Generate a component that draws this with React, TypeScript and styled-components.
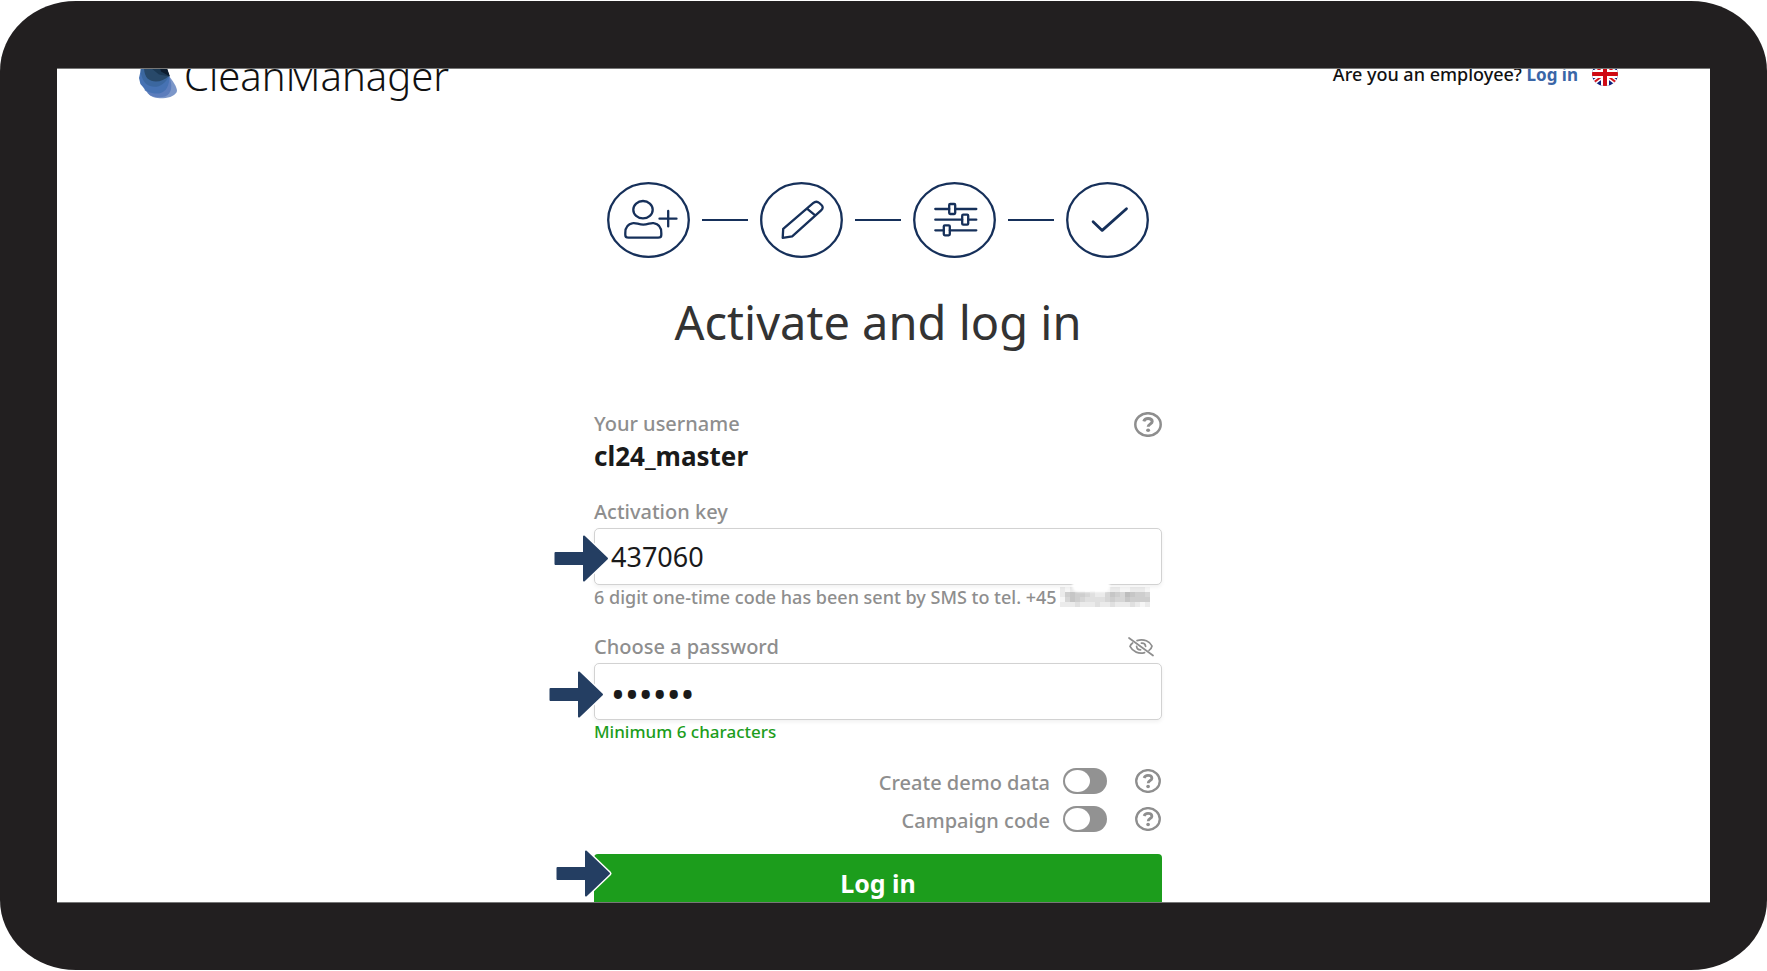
import React from 'react';
import styled, { createGlobalStyle } from 'styled-components';

const navy = '#16305a';
const grey = '#8e8e8e';
const green = '#1c9d1c';

const GlobalStyle = createGlobalStyle`
  *, *::before, *::after { box-sizing: border-box; }
  body {
    margin: 0;
    background: #fff;
    color: #1a1a1a;
    font-family: "Noto Sans", sans-serif;
    font-weight: 500;
  }
`;

const Page = styled.div`
  display: flex;
  height: 100vh;
  padding: 1px 0;
`;

const Device = styled.div`
  display: flex;
  flex: 1;
  min-width: 0;
  padding: 67px 57px;
  background: #221f20;
  border-radius: 76px / 70px;
`;

const Screen = styled.div`
  flex: 1;
  min-width: 0;
  overflow: hidden;
  padding-right: 11px;
  background: #fff;
  border: solid #777;
  border-width: 1px 0;
`;

const Header = styled.header`
  display: flex;
  align-items: center;
  justify-content: space-between;
  height: 56px;
  margin-top: -23px;
  padding: 0 81px 0 82px;
`;

const Brand = styled.a`
  display: flex;
  align-items: center;
  gap: 5px;
  color: #111;
  font-size: 40px;
  font-weight: 300;
  line-height: 56px;
  text-decoration: none;
`;

const BrandName = styled.span`
  padding-top: 4px;
`;

const HeaderTools = styled.div`
  display: flex;
  align-items: center;
  gap: 14px;
`;

const Employee = styled.p`
  margin: 0;
  color: #111;
  font-size: 18px;
  line-height: 24px;
`;

const EmployeeLink = styled.a`
  color: #3a66a7;
  font-size: 17px;
  font-weight: 700;
  text-decoration: none;
`;

const IconButton = styled.button`
  display: flex;
  padding: 0;
  border: 0;
  background: none;
  color: ${grey};
  cursor: pointer;
`;

const Main = styled.main`
  display: flex;
  flex-direction: column;
  align-items: center;
  padding-top: 80px;
`;

const Steps = styled.ol`
  display: flex;
  align-items: center;
  gap: 12px;
  margin: 0;
  padding: 0;
  list-style: none;
`;

const Step = styled.li`
  display: flex;
  align-items: center;
  gap: 12px;

  & + &::before {
    content: "";
    width: 46px;
    height: 2px;
    background: ${navy};
  }
`;

const StepIcon = styled.svg`
  display: block;
  fill: none;
  stroke: ${navy};
  stroke-width: 2.3;
  stroke-linecap: round;
  stroke-linejoin: round;
`;

const Title = styled.h1`
  margin: 36px 0 62px;
  color: #333;
  font-size: 47px;
  font-weight: 400;
  line-height: 56px;
`;

const Form = styled.form`
  width: 568px;
  max-width: 100%;
`;

const Section = styled.div`
  margin-bottom: 28px;
`;

const LabelRow = styled.div`
  display: flex;
  align-items: center;
  justify-content: space-between;
  height: 24px;
  margin-bottom: 4px;
`;

const labelText = `
  color: ${grey};
  font-size: 20px;
  line-height: 24px;
`;

const Label = styled.label`${labelText}`;
const Caption = styled.span`${labelText}`;

const EyeButton = styled(IconButton)`
  margin-right: 8px;
`;

const Username = styled.p`
  margin: 0;
  font-size: 26px;
  font-weight: 700;
  line-height: 32px;
`;

const Target = styled.div`
  position: relative;
`;

const Input = styled.input`
  display: block;
  width: 100%;
  height: 57px;
  padding: ${(p) => (p.type === 'password' ? '4px 16px 0' : '0 16px')};
  border: 1px solid #d2d2d2;
  border-radius: 5px;
  background: #fff;
  box-shadow: 0 2px 4px rgba(0, 0, 0, 0.06);
  color: #1a1a1a;
  font-family: inherit;
  font-size: ${(p) => (p.type === 'password' ? 37 : 27)}px;
  outline: none;
`;

const Hint = styled.p<{ $valid?: boolean }>`
  display: flex;
  gap: 3px;
  margin: 2px 0 0;
  color: ${(p) => (p.$valid ? green : grey)};
  font-size: ${(p) => (p.$valid ? 17 : 18)}px;
  line-height: 20px;
`;

const Arrow = styled.svg<{ $left: number; $top: number }>`
  position: absolute;
  left: ${(p) => p.$left}px;
  top: ${(p) => p.$top}px;
  overflow: visible;
  pointer-events: none;
`;

const Smudge = styled.span`
  position: absolute;
  right: 52px;
  bottom: -7px;
  width: 38px;
  height: 12px;
  border-radius: 10px;
  background: #fff;
  filter: blur(1px);
`;

const Options = styled.div`
  display: grid;
  gap: 12px;
  margin: 26px 0 22px;
`;

const Option = styled.div`
  display: flex;
  align-items: center;
  justify-content: flex-end;
  height: 26px;
  padding-right: 1px;
`;

const OptionLabel = styled(Label)`
  padding-top: 3px;
  margin-right: 13px;
`;

const Toggle = styled.input`
  appearance: none;
  width: 44px;
  height: 26px;
  margin: 0 28px 0 0;
  padding: 2px;
  border-radius: 13px;
  background: #929292;
  cursor: pointer;

  &::before {
    content: "";
    display: block;
    width: 25px;
    height: 22px;
    border-radius: 50%;
    background: #fff;
  }

  &:checked::before {
    margin-left: auto;
  }
`;

const Submit = styled.button`
  display: block;
  width: 100%;
  height: 57px;
  border: 0;
  border-radius: 4px;
  background: ${green};
  color: #fff;
  font-family: inherit;
  font-size: 25px;
  font-weight: 700;
  line-height: 32px;
  cursor: pointer;
`;

const Logo = () => (
  <svg width="40" height="50" viewBox="0 0 40 50" aria-hidden="true">
    <path fill="#7c97c9" d="M10 12 L30 27 C34 32 38 38 38 42 C37 46 31 49 24 49.3 C18 49.5 11 48 10 45 L6 30Z" />
    <path fill="#5c7dbc" d="M6 40 L4 26 L30 27 C34 36 33 45 26 47.6 C20 49.4 10 48 8 43 L5.4 41Z" />
    <path fill="#4672b3" d="M0 29 L2 20 L30 27 C31 36 27 43.5 20 44.5 C12 45 6 42 4 38 L1.4 35Z" />
    <path fill="#3b679f" d="M1.6 8 H24 L30 27 C26 36 18 39.6 11 37 C5 35 1.6 28 1.6 20Z" />
    <path fill="#28496a" d="M5 8 H24 L30 27 C24 33 14 34.6 8.6 29.6 C6 27 5 22 5 18Z" />
    <path fill="#1b3853" d="M12 8 H24 L30.6 27.6 L20 25.6 L12 19Z" />
    <path fill="#0c1c2e" d="M18 8 H24 L31 27.6 L22 22.6Z" />
  </svg>
);

const Flag = () => (
  <svg width="26" height="24" viewBox="0 0 26 24" preserveAspectRatio="none" aria-hidden="true">
    <clipPath id="flag-disc"><ellipse cx="13" cy="12" rx="13" ry="12" /></clipPath>
    <g clipPath="url(#flag-disc)">
      <rect width="26" height="24" fill="#10207c" />
      <path d="M-3 0 L29 24 M29 0 L-3 24" stroke="#fff" strokeWidth="5" />
      <path d="M-3 0 L29 24 M29 0 L-3 24" stroke="#d8141c" strokeWidth="2" />
      <path d="M13 0 V24 M0 12 H26" stroke="#fff" strokeWidth="8" />
      <path d="M13 0 V24 M0 12 H26" stroke="#cf0a14" strokeWidth="4" />
    </g>
  </svg>
);

const HelpIcon = ({ width = 26, height = 24 }: { width?: number; height?: number }) => (
  <svg width={width} height={height} viewBox="0 0 28 25" preserveAspectRatio="none" fill="none" stroke="currentColor" aria-hidden="true">
    <ellipse cx="14" cy="12.5" rx="12.7" ry="11.3" strokeWidth="2.5" />
    <path d="M9.8 9.4 C10.4 7.4 12 6.6 14 6.6 C16.6 6.6 18.2 7.8 18.2 9.6 C18.2 12.2 14.2 11.8 14.2 14.8" strokeWidth="3" />
    <ellipse cx="14.1" cy="18.2" rx="2" ry="1.8" fill="currentColor" stroke="none" />
  </svg>
);

const EyeOffIcon = () => (
  <svg width="26" height="20" viewBox="0 0 26 20" fill="none" stroke="currentColor" strokeWidth="1.7" strokeLinecap="round" aria-hidden="true">
    <path d="M1 1 L25 18.5" />
    <path d="M9 3.6 C16 1.4 22 4.6 24 9 C23.6 11 22.6 12.4 21 13.4" />
    <path d="M4.6 6 C3.2 7 2.4 8 2 9.4 C4.6 14.6 11 17.4 16.6 15.6" />
    <path d="M13.4 6.2 C15.6 6 17.4 7.4 17.6 9.4 M8.6 9.4 C8.8 11.6 10.4 12.8 12.6 12.8" />
  </svg>
);

const PointerArrow = ({ left, top }: { left: number; top: number }) => (
  <Arrow $left={left} $top={top} width="55" height="47" viewBox="0 0 55 47" aria-hidden="true">
    <path
      d="M1.5 18 H30 V1.5 L53 23.5 L30 45.5 V29 H1.5 Z"
      fill="none" stroke="#fff" strokeWidth="5" strokeLinejoin="round"
    />
    <path
      d="M1.5 18 H30 V1.5 L53 23.5 L30 45.5 V29 H1.5 Z"
      fill="#243e62" stroke="#243e62" strokeWidth="2" strokeLinejoin="round"
    />
  </Arrow>
);

const mosaic = [
  '101110100011001110',
  '145443211354365443',
  '035432222343354444',
  '111211121121112101',
];
const mosaicShades = ['#f6f6f6', '#ebebeb', '#e0e0e0', '#d6d6d6', '#cecece', '#c6c6c6', '#bdbdbd'];

const HiddenNumber = () => (
  <svg width="90" height="20" viewBox="0 0 90 20" role="img" aria-label="Hidden phone number" shapeRendering="crispEdges">
    {mosaic.map((row, y) =>
      row.split('').map((shade, x) => (
        <rect key={`${x}-${y}`} x={x * 5} y={y * 5} width="5" height="5" fill={mosaicShades[Number(shade)]} />
      )),
    )}
  </svg>
);

const stepIcons = [
  {
    name: 'Create user',
    art: (
      <>
        <ellipse cx="36.5" cy="27.7" rx="9.7" ry="8.7" />
        <path d="M26.4 41.2 C29.6 40.6 32 42.6 36.8 42.6 S44 40.6 47.2 41.2 C52.4 42 54.8 46 54.8 51 V53 Q54.8 55.7 51.6 55.7 H22 Q18.8 55.7 18.8 53 V51 C18.8 46 21.2 42 26.4 41.2Z" />
        <path d="M53 36.7 H70 M61.7 29 V44.4" />
      </>
    ),
  },
  {
    name: 'Enter details',
    art: <path d="M23.7 46.9 L53.6 21.2 Q56.8 18.4 59.8 21 L62 23 Q64.6 25.6 61.6 28.4 L32.7 54.3 L23.2 55.8 Z M47.5 26.6 L56 33.6" />,
  },
  {
    name: 'Settings',
    art: (
      <>
        <path d="M22.8 27 H36.7 M42.7 27 H63.8 M22.8 37.7 H49.7 M55.7 37.7 H63.8 M22.8 48.3 H31.3 M37.3 48.3 H63.8" />
        <rect x="36.7" y="22" width="6" height="10" rx="1" />
        <rect x="49.7" y="32.7" width="6" height="10" rx="1" />
        <rect x="31.3" y="43.3" width="6" height="10" rx="1" />
      </>
    ),
  },
  {
    name: 'Done',
    art: <path d="M27.6 39.8 L36.7 48.4 L61 26.8" strokeWidth="2.8" />,
  },
];

export default function App() {
  return (
    <>
      <GlobalStyle />
      <Page>
        <Device>
          <Screen>
            <Header>
              <Brand href="#home">
                <Logo />
                <BrandName>CleanManager</BrandName>
              </Brand>
              <HeaderTools>
                <Employee>
                  Are you an employee? <EmployeeLink href="#employee">Log in</EmployeeLink>
                </Employee>
                <IconButton type="button" aria-label="Language: English">
                  <Flag />
                </IconButton>
              </HeaderTools>
            </Header>
            <Main>
              <Steps>
                {stepIcons.map((step) => (
                  <Step key={step.name} aria-label={step.name}>
                    <StepIcon width="83" height="76" viewBox="0.5 0 83 76" aria-hidden="true">
                      <ellipse cx="42" cy="38" rx="40.3" ry="36.8" />
                      {step.art}
                    </StepIcon>
                  </Step>
                ))}
              </Steps>
              <Title>Activate and log in</Title>
              <Form onSubmit={(e) => e.preventDefault()}>
                <Section>
                  <LabelRow>
                    <Caption>Your username</Caption>
                    <IconButton type="button" aria-label="Help with username">
                      <HelpIcon width={28} height={25} />
                    </IconButton>
                  </LabelRow>
                  <Username>cl24_master</Username>
                </Section>
                <Section>
                  <LabelRow>
                    <Label htmlFor="activation-key">Activation key</Label>
                  </LabelRow>
                  <Target>
                    <Input id="activation-key" type="text" defaultValue="437060" />
                    <PointerArrow left={-40} top={7} />
                    <Smudge />
                  </Target>
                  <Hint>
                    6 digit one-time code has been sent by SMS to tel. +45
                    <HiddenNumber />
                  </Hint>
                </Section>
                <LabelRow>
                  <Label htmlFor="password">Choose a password</Label>
                  <EyeButton type="button" aria-label="Show password">
                    <EyeOffIcon />
                  </EyeButton>
                </LabelRow>
                <Target>
                  <Input id="password" type="password" defaultValue="secret" />
                  <PointerArrow left={-45} top={8} />
                </Target>
                <Hint $valid>Minimum 6 characters</Hint>
                <Options>
                  <Option>
                    <OptionLabel htmlFor="demo-data">Create demo data</OptionLabel>
                    <Toggle id="demo-data" type="checkbox" role="switch" />
                    <IconButton type="button" aria-label="Help with demo data">
                      <HelpIcon />
                    </IconButton>
                  </Option>
                  <Option>
                    <OptionLabel htmlFor="campaign">Campaign code</OptionLabel>
                    <Toggle id="campaign" type="checkbox" role="switch" />
                    <IconButton type="button" aria-label="Help with campaign code">
                      <HelpIcon />
                    </IconButton>
                  </Option>
                </Options>
                <Target>
                  <Submit type="submit">Log in</Submit>
                  <PointerArrow left={-38} top={-4} />
                </Target>
              </Form>
            </Main>
          </Screen>
        </Device>
      </Page>
    </>
  );
}
